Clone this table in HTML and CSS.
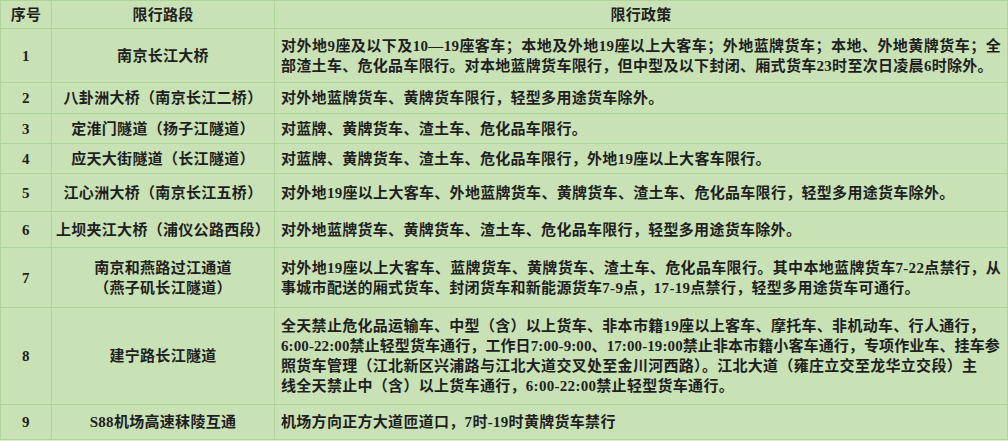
FILE: index.html
```html
<!DOCTYPE html>
<html lang="zh-CN">
<head>
<meta charset="utf-8">
<title>南京过江通道限行政策</title>
<link rel="stylesheet" href="styles.css">
</head>
<body>
<table class="policy">
  <colgroup><col class="c-no"><col class="c-road"><col class="c-rule"></colgroup>
  <thead>
    <tr class="h-head"><th>序号</th><th>限行路段</th><th>限行政策</th></tr>
  </thead>
  <tbody>
    <tr class="h-r1">
      <td class="no">1</td><td class="road">南京长江大桥</td>
      <td class="rule"><span class="ln j">对外地9座及以下及10—19座客车；本地及外地19座以上大客车；外地蓝牌货车；本地、外地黄牌货车；全</span><span class="ln">部渣土车、危化品车限行。对本地蓝牌货车限行，但中型及以下封闭、厢式货车23时至次日凌晨6时除外。</span></td>
    </tr>
    <tr class="h-r2">
      <td class="no">2</td><td class="road">八卦洲大桥（南京长江二桥）</td>
      <td class="rule"><span class="ln">对外地蓝牌货车、黄牌货车限行，轻型多用途货车除外。</span></td>
    </tr>
    <tr class="h-r3">
      <td class="no">3</td><td class="road">定淮门隧道（扬子江隧道）</td>
      <td class="rule"><span class="ln">对蓝牌、黄牌货车、渣土车、危化品车限行。</span></td>
    </tr>
    <tr class="h-r4">
      <td class="no">4</td><td class="road">应天大街隧道（长江隧道）</td>
      <td class="rule"><span class="ln">对蓝牌、黄牌货车、渣土车、危化品车限行，外地19座以上大客车限行。</span></td>
    </tr>
    <tr class="h-r5">
      <td class="no">5</td><td class="road">江心洲大桥（南京长江五桥）</td>
      <td class="rule"><span class="ln">对外地19座以上大客车、外地蓝牌货车、黄牌货车、渣土车、危化品车限行，轻型多用途货车除外。</span></td>
    </tr>
    <tr class="h-r6">
      <td class="no">6</td><td class="road">上坝夹江大桥（浦仪公路西段）</td>
      <td class="rule"><span class="ln">对外地蓝牌货车、黄牌货车、渣土车、危化品车限行，轻型多用途货车除外。</span></td>
    </tr>
    <tr class="h-r7">
      <td class="no">7</td><td class="road"><span class="ln">南京和燕路过江通道</span><span class="ln">（燕子矶长江隧道）</span></td>
      <td class="rule"><span class="ln j">对外地19座以上大客车、蓝牌货车、黄牌货车、渣土车、危化品车限行。其中本地蓝牌货车7-22点禁行，从</span><span class="ln">事城市配送的厢式货车、封闭货车和新能源货车7-9点，17-19点禁行，轻型多用途货车可通行。</span></td>
    </tr>
    <tr class="h-r8">
      <td class="no">8</td><td class="road">建宁路长江隧道</td>
      <td class="rule"><span class="ln">全天禁止危化品运输车、中型（含）以上货车、非本市籍19座以上客车、摩托车、非机动车、行人通行，</span><span class="ln tight">6:00-22:00禁止轻型货车通行，工作日7:00-9:00、17:00-19:00禁止非本市籍小客车通行，专项作业车、挂车参</span><span class="ln">照货车管理（江北新区兴浦路与江北大道交叉处至金川河西路）。江北大道（雍庄立交至龙华立交段）主</span><span class="ln">线全天禁止中（含）以上货车通行，6:00-22:00禁止轻型货车通行。</span></td>
    </tr>
    <tr class="h-r9">
      <td class="no">9</td><td class="road">S88机场高速秣陵互通</td>
      <td class="rule"><span class="ln">机场方向正方大道匝道口，7时-19时黄牌货车禁行</span></td>
    </tr>
  </tbody>
</table>
</body>
</html>
```
FILE: styles.css
```css
html, body {
  margin: 0;
  padding: 0;
}
body {
  background: #e3ecc4;
  font-family: "Liberation Serif", "Noto Sans CJK SC", serif;
}
.policy {
  border-collapse: collapse;
  table-layout: fixed;
  width: 1007px;
  background: #c8e2b6;
  color: #1f1f1f;
  font-size: 15px;
  font-weight: 700;
  letter-spacing: 0.3px;
}
.policy th,
.policy td {
  border: 1px solid #b0d39b;
  padding: 0;
  vertical-align: middle;
  line-height: 20px;
}
.c-no { width: 51px; }
.c-road { width: 223px; }
.c-rule { width: 733px; }
.policy th,
.no,
.road {
  text-align: center;
}
.policy .rule {
  padding: 0 6px 0 6px;
  text-align: left;
}
.ln {
  display: block;
  white-space: nowrap;
}
.j {
  text-align: justify;
  text-align-last: justify;
}
.tight {
  letter-spacing: 0.1px;
}
.h-head { height: 28px; }
.h-r1 { height: 54px; }
.h-r2 { height: 31px; }
.h-r3 { height: 30px; }
.h-r4 { height: 30px; }
.h-r5 { height: 38px; }
.h-r6 { height: 36px; }
.h-r7 { height: 60px; }
.h-r8 { height: 97px; }
.h-r9 { height: 35px; }
```
